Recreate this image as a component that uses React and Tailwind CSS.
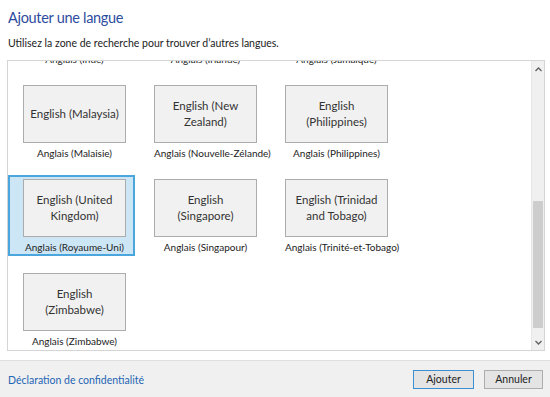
import React from "react";

const rows = [
  [
    [["English (India)"], "Anglais (Inde)"],
    [["English (Ireland)"], "Anglais (Irlande)"],
    [["English (Jamaica)"], "Anglais (Jamaïque)"],
  ],
  [
    [["English (Malaysia)"], "Anglais (Malaisie)"],
    [["English (New", "Zealand)"], "Anglais (Nouvelle-Zélande)"],
    [["English", "(Philippines)"], "Anglais (Philippines)"],
  ],
  [
    [["English (United", "Kingdom)"], "Anglais (Royaume-Uni)", true],
    [["English", "(Singapore)"], "Anglais (Singapour)"],
    [["English (Trinidad", "and Tobago)"], "Anglais (Trinité-et-Tobago)"],
  ],
  [[["English", "(Zimbabwe)"], "Anglais (Zimbabwe)"]],
];

const font = { fontFamily: "Lato, 'Noto Sans', sans-serif" };

const Tile = ({ lines, label, selected }) => {
  return (
    <div
      className={
        selected
          ? "h-[81px] border-2 border-[#4aa6dc] bg-[#cce6f6] pl-[13px] pr-[8px] pt-[2px]"
          : "h-[81px] border-2 border-transparent pl-[13px] pr-[8px] pt-[2px]"
      }
    >
      <div className="flex h-[58px] w-[103px] flex-col items-center justify-center border border-[#acacac] bg-[#f1f1f1] text-center text-[11.5px] leading-[16px] whitespace-nowrap text-[#333]">
        {lines.map((l) => (
          <span key={l}>{l}</span>
        ))}
      </div>
      <div className="mt-[3px] w-[103px] whitespace-nowrap text-center text-[10px] leading-[14px] text-[#222]">
        {label}
      </div>
    </div>
  );
};

export default function App() {
  return (
    <div className="flex h-[397px] w-[550px] flex-col bg-white" style={font}>
      <div className="flex-1 px-[7px]">
        <h1 className="pl-[1px] pt-[8px] text-[14.5px] leading-[20px] tracking-[-0.3px] text-[#2d4c9e]">
          Ajouter une langue
        </h1>
        <p className="mt-[8px] pl-[1px] text-[10.5px] leading-[14px] text-[#222]">
          Utilisez la zone de recherche pour trouver d’autres langues.
        </p>

        {/* list box */}
        <div className="mt-[10px] flex h-[291px] w-[538px] border border-[#d5d5d5]">
          <div className="flex-1 overflow-hidden">
            <div className="mt-[-74px] grid grid-cols-[127px_127px_127px] gap-x-[4px] gap-y-[13px]">
              {rows.flat().map(([lines, label, selected]) => (
                <Tile key={label} lines={lines} label={label} selected={selected} />
              ))}
            </div>
          </div>

          {/* scrollbar */}
          <div className="flex w-[13px] flex-col bg-[#f0f0f0] border-l border-[#e6e6e6]">
            <div className="flex h-[16px] items-center justify-center">
              <svg width="7" height="5" viewBox="0 0 7 5">
                <path d="M0.5 4 L3.5 1 L6.5 4" fill="none" stroke="#606060" strokeWidth="1.3" />
              </svg>
            </div>
            <div className="flex-1 flex flex-col">
              <div className="h-[124px]" />
              <div className="mx-[1px] h-[127px] bg-[#cdcdcd]" />
            </div>
            <div className="flex h-[16px] items-center justify-center">
              <svg width="7" height="5" viewBox="0 0 7 5">
                <path d="M0.5 1 L3.5 4 L6.5 1" fill="none" stroke="#606060" strokeWidth="1.3" />
              </svg>
            </div>
          </div>
        </div>
      </div>

      {/* footer */}
      <div className="flex h-[37px] items-center justify-between border-t border-[#dfdfdf] bg-[#f0f0f0] pl-[8px] pr-[7px]">
        <a className="pt-[3px] text-[10.5px] text-[#1e65b4]">Déclaration de confidentialité</a>
        <div className="flex gap-[10px]">
          <button className="h-[19px] w-[61px] border border-[#3c8fd0] bg-[#e4e4e4] text-[10.5px] leading-none text-[#222]">
            Ajouter
          </button>
          <button className="h-[19px] w-[59px] border border-[#adadad] bg-[#e4e4e4] text-[10.5px] leading-none text-[#222]">
            Annuler
          </button>
        </div>
      </div>
    </div>
  );
}
